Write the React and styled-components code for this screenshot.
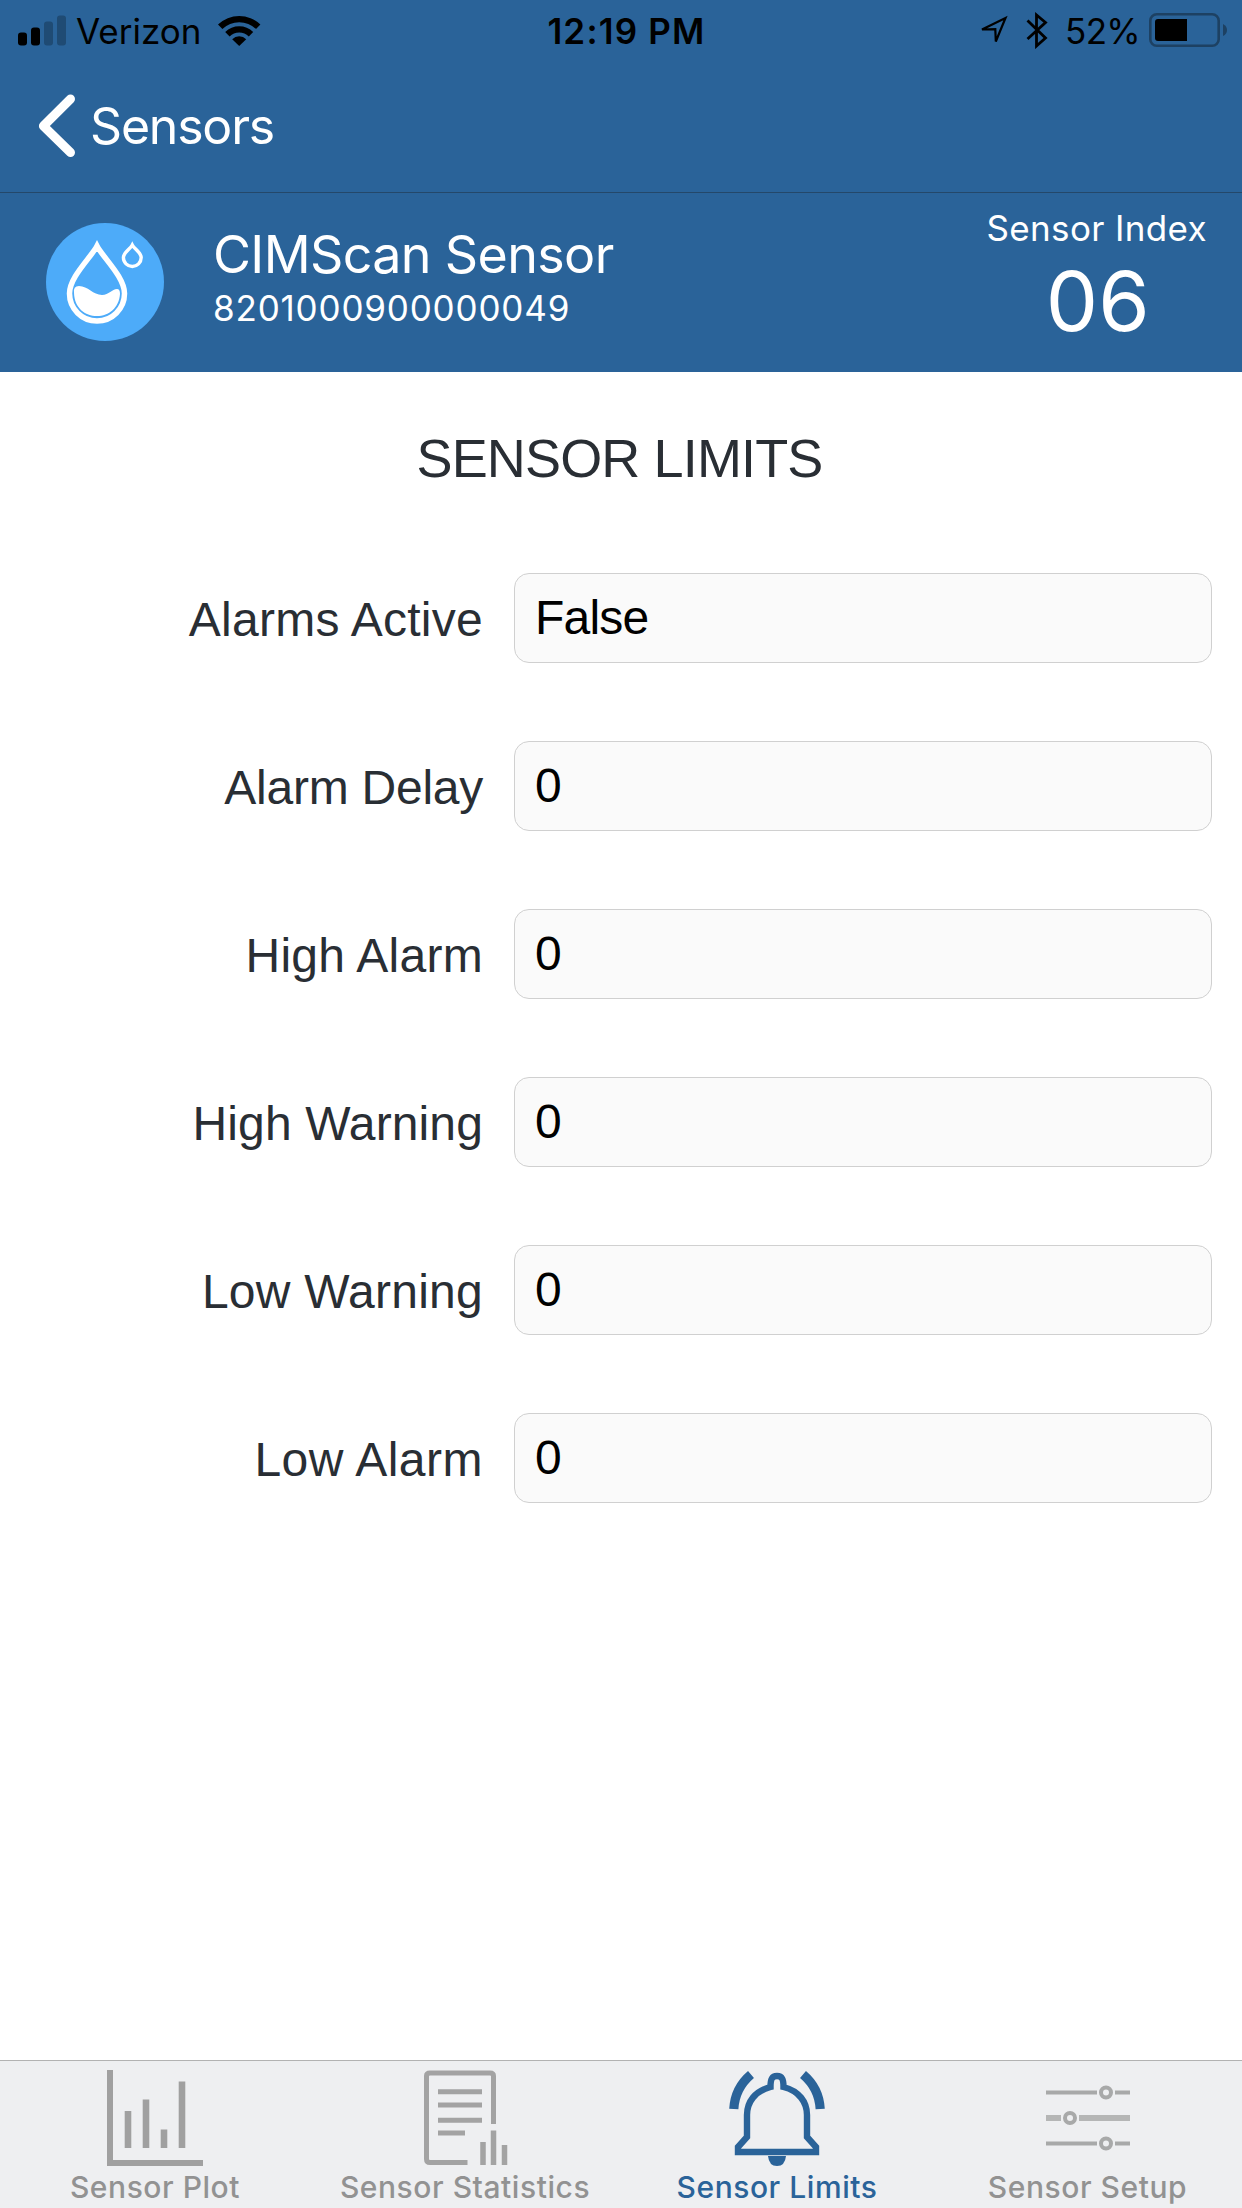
import React from "react";
import styled, { createGlobalStyle } from "styled-components";

const blue = "#2a6399";

const Global = createGlobalStyle`
  body { margin: 0; background: #fff; }
  * { box-sizing: border-box; }
`;

const Screen = styled.div`
  width: 1242px;
  height: 2208px;
  display: flex;
  flex-direction: column;
  background: #fff;
  font-family: Inter, "Liberation Sans", sans-serif;
  overflow: hidden;
`;

const Label = styled.span`
  display: block;
  white-space: nowrap;
  padding-left: ${(p) => p.$indent || 0}px;
  padding-top: ${(p) => p.$drop || 0}px;
  font-size: ${(p) => p.$size}px;
  line-height: ${(p) => p.$line}px;
  letter-spacing: ${(p) => p.$track || 0}px;
  font-weight: ${(p) => p.$weight || 400};
`;

const StatusBar = styled.header`
  height: 60px;
  padding: 0 15px 0 18px;
  display: grid;
  grid-template-columns: 1fr auto 1fr;
  align-items: center;
  background: ${blue};
  color: #000;
`;

const StatusGroup = styled.div`
  display: flex;
  align-items: center;
  justify-content: ${(p) => (p.$end ? "flex-end" : "flex-start")};
  gap: ${(p) => p.$gap}px;
  svg { display: block; flex: none; }
`;

const NavBar = styled.nav`
  height: 133px;
  padding: 0 0 0 38px;
  display: flex;
  align-items: center;
  gap: 14px;
  background: ${blue};
  border-bottom: 1px solid #24486a;
  color: #fff;
`;

const SensorHeader = styled.section`
  height: 179px;
  padding: 0 35px 0 46px;
  display: flex;
  background: ${blue};
  color: #fff;
`;

const SensorBadge = styled.div`
  padding-top: 30px;
  width: 167px;
  svg { display: block; }
`;

const SensorName = styled.div`
  flex: 1;
  padding-top: 28px;
`;

const SensorIndex = styled.div`
  padding-top: 14px;
  display: flex;
  flex-direction: column;
  align-items: center;
`;

const Content = styled.main`
  flex: 1;
  padding: 53px 30px 0 0;
`;

const Title = styled.h1`
  margin: 0 0 82px 0;
  padding-left: 27px;
  text-align: center;
  font: 400 54px/66px "Liberation Sans", Arial, sans-serif;
  letter-spacing: -0.85px;
  color: #292e34;
`;

const Form = styled.div`
  display: flex;
  flex-direction: column;
  gap: 78px;
`;

const FieldRow = styled.label`
  display: grid;
  grid-template-columns: 483px 698px;
  column-gap: 31px;
  height: 90px;
  align-items: center;
  font-family: "Liberation Sans", Arial, sans-serif;
`;

const FieldName = styled.span`
  padding-top: 4px;
  text-align: right;
  font-size: 48px;
  line-height: 56px;
  letter-spacing: ${(p) => p.$track}px;
  color: #292e34;
  white-space: nowrap;
`;

const FieldBox = styled.div`
  height: 90px;
  padding: 0 20px;
  border: 1px solid #d0d0d0;
  border-radius: 15px;
  background: #fafafa;
  font-size: 48px;
  line-height: 88px;
  letter-spacing: -0.8px;
  color: #000;
`;

const TabBar = styled.footer`
  height: 148px;
  display: grid;
  grid-template-columns: 310px 310px 314px 307px;
  background: #eeeff1;
  border-top: 1px solid #b2b2b2;
`;

const Tab = styled.div`
  display: flex;
  flex-direction: column;
  align-items: center;
  padding-top: 9px;
  color: ${(p) => (p.$active ? blue : "#929292")};
  svg { display: block; height: 96px; }
`;

const SignalIcon = () => (
  <svg width="49" height="31" viewBox="0 0 49 31">
    <rect x="0" y="17.5" width="9" height="13" rx="3" />
    <rect x="13" y="12.5" width="9" height="18" rx="3" />
    <g fill="#1f4b74">
      <rect x="26" y="6.5" width="9" height="24" rx="3" />
      <rect x="39" y="0.5" width="9" height="30" rx="3" />
    </g>
  </svg>
);

const WifiIcon = () => (
  <svg width="43" height="31" viewBox="0 0 43 31">
    <path d="M0 9.5A30.5 30.5 0 0 1 42.4 9.5L38 14A24 24 0 0 0 4.4 14Z" />
    <path d="M7.2 17A20 20 0 0 1 35.2 17L30.8 21.4A13.6 13.6 0 0 0 11.6 21.4Z" />
    <path d="M14.2 24.2A10 10 0 0 1 28.2 24.2L21.2 31Z" />
  </svg>
);

const LocationIcon = () => (
  <svg width="32" height="34" viewBox="0 0 32 34" fill="none" stroke="#000" strokeWidth="2.2">
    <path d="M5 16.500L28.500 5L18.800 28.500L18.300 16.200Z" />
  </svg>
);

const BluetoothIcon = () => (
  <svg width="22" height="38" viewBox="0 0 22 38" fill="none" stroke="#000" strokeWidth="2.8">
    <path d="M1.500 9.500L19.500 27L10.500 35V4L19.500 11.500L1.500 28" />
  </svg>
);

const BatteryIcon = () => (
  <svg width="78" height="34" viewBox="0 0 78 34">
    <rect x="1.3" y="1.3" width="68.4" height="31.4" rx="6.5" fill="none" stroke="#1d4163" strokeWidth="2.6" />
    <path d="M9 6H38V28H9Q6 28 6 25V9Q6 6 9 6Z" />
    <path d="M74 11Q78 13 78 17T74 23Z" fill="#1d4163" />
  </svg>
);

const BackIcon = () => (
  <svg width="38" height="64" viewBox="0 0 38 64" fill="none" stroke="#fff" strokeWidth="9" strokeLinecap="round" strokeLinejoin="round">
    <path d="M32.500 5L5.400 32L32.500 58.500" />
  </svg>
);

const DropletIcon = () => (
  <svg width="118" height="118" viewBox="0 0 118 118">
    <circle cx="59" cy="59" r="59" fill="#4dabf9" />
    <g fill="none" stroke="#fff">
      <path d="M51 23C45 34.500 23.500 54 23.500 70.500A27.500 27.500 0 0 0 78.500 70.500C78.500 54 57 34.500 51 23Z" strokeWidth="5.500" />
      <path d="M86.300 22C84.300 26 77.400 29.500 77.400 34.600A8.900 8.900 0 0 0 95.200 34.600C95.200 29.500 88.300 26 86.300 22Z" strokeWidth="3.400" />
    </g>
    <path d="M28 70Q27 63 33 63C42 63 47 72 56 72C63 72 66 66 71 66Q74 66 74 71C73 85 63 93 51 93C39 93 28.500 85 28 70Z" fill="#fff" />
  </svg>
);

const PlotIcon = () => (
  <svg width="96" height="96" viewBox="0 0 96 96" fill="none" stroke="#a0a0a0" strokeWidth="6">
    <path d="M3 0V93H96" />
    <path d="M21 41V78M39 29.500V78M57 59.500V78M75 11.500V78" strokeWidth="6.600" />
  </svg>
);

const StatisticsIcon = () => (
  <svg width="96" height="96" viewBox="0 0 96 96" fill="none" stroke="#a3a3a3" strokeWidth="5">
    <path d="M76.500 54V6Q76.500 3 73 3H13Q9.500 3 9.500 6V89Q9.500 92.500 13 92.500H50.500" />
    <path d="M21 21.700H65M21 35H65M21 50.300H65M21 63H48" />
    <path d="M66 72V95M76.500 60.500V95M87.500 75V95" strokeWidth="5.500" />
  </svg>
);

const BellIcon = () => (
  <svg width="96" height="96" viewBox="0 0 96 96" fill="none" stroke={blue} strokeWidth="6.4">
    <path d="M48 6C43 6 41.500 9 41.500 17C26 21 18 32 18 45V67L9 77V82H87V77L78 67V45C78 32 70 21 54.500 17C54.500 9 53 6 48 6Z" />
    <path d="M4.800 39Q6 18 22 4.500M91.200 39Q90 18 74 4.500" strokeWidth="9.200" />
    <path d="M39 86H57Q56 96 48 96T39 86Z" fill={blue} stroke="none" />
  </svg>
);

const SetupIcon = () => (
  <svg width="96" height="96" viewBox="0 0 96 96" fill="none" stroke="#a8a9a9" strokeWidth="4">
    <path d="M6 22.500H57M75 22.500H90M6 73.500H57M75 73.500H90" />
    <path d="M6 48H21M39 48H90" strokeWidth="6" stroke="#b5b6b6" />
    <circle cx="66" cy="22.500" r="5" />
    <circle cx="30" cy="48" r="5" />
    <circle cx="66" cy="73.500" r="5" />
  </svg>
);

const fields = [
  ["Alarms Active", "False", 0.27],
  ["Alarm Delay", "0", -0.25],
  ["High Alarm", "0", 0.28],
  ["High Warning", "0", 0.12],
  ["Low Warning", "0", 0.25],
  ["Low Alarm", "0", 0.5],
];

const tabs = [
  ["Sensor Plot", PlotIcon],
  ["Sensor Statistics", StatisticsIcon],
  ["Sensor Limits", BellIcon],
  ["Sensor Setup", SetupIcon],
];

export default function App() {
  return (
    <>
      <Global />
      <Screen>
        <StatusBar>
          <StatusGroup $gap={9}>
            <SignalIcon />
            <Label $size={35} $line={42} $drop={2} $track={0}>Verizon</Label>
            <Label as="div" $indent={8}><WifiIcon /></Label>
          </StatusGroup>
          <Label $size={35} $line={42} $drop={2} $weight={600} $track={1.2} $indent={8}>12:19 PM</Label>
          <StatusGroup $end $gap={17}>
            <LocationIcon />
            <BluetoothIcon />
            <StatusGroup $gap={9}>
              <Label $size={35} $line={42} $drop={2} $track={-0.7}>52%</Label>
              <BatteryIcon />
            </StatusGroup>
          </StatusGroup>
        </StatusBar>
        <NavBar>
          <BackIcon />
          <Label $size={50} $line={60} $track={-1.2}>Sensors</Label>
        </NavBar>
        <SensorHeader>
          <SensorBadge><DropletIcon /></SensorBadge>
          <SensorName>
            <Label $size={52} $line={67} $track={-0.65}>CIMScan Sensor</Label>
            <Label $size={35} $line={40} $track={0.82}>8201000900000049</Label>
          </SensorName>
          <SensorIndex>
            <Label $size={35} $line={42} $track={0.35}>Sensor Index</Label>
            <Label $size={83} $line={104} $indent={2}>06</Label>
          </SensorIndex>
        </SensorHeader>
        <Content>
          <Title>SENSOR LIMITS</Title>
          <Form>
            {fields.map(([name, value, track]) => (
              <FieldRow key={name}>
                <FieldName $track={track}>{name}</FieldName>
                <FieldBox>{value}</FieldBox>
              </FieldRow>
            ))}
          </Form>
        </Content>
        <TabBar>
          {tabs.map(([name, Icon]) => (
            <Tab key={name} $active={name === "Sensor Limits"}>
              <Icon />
              <Label $size={30} $line={42} $track={0.55} $weight={500}>{name}</Label>
            </Tab>
          ))}
        </TabBar>
      </Screen>
    </>
  );
}
